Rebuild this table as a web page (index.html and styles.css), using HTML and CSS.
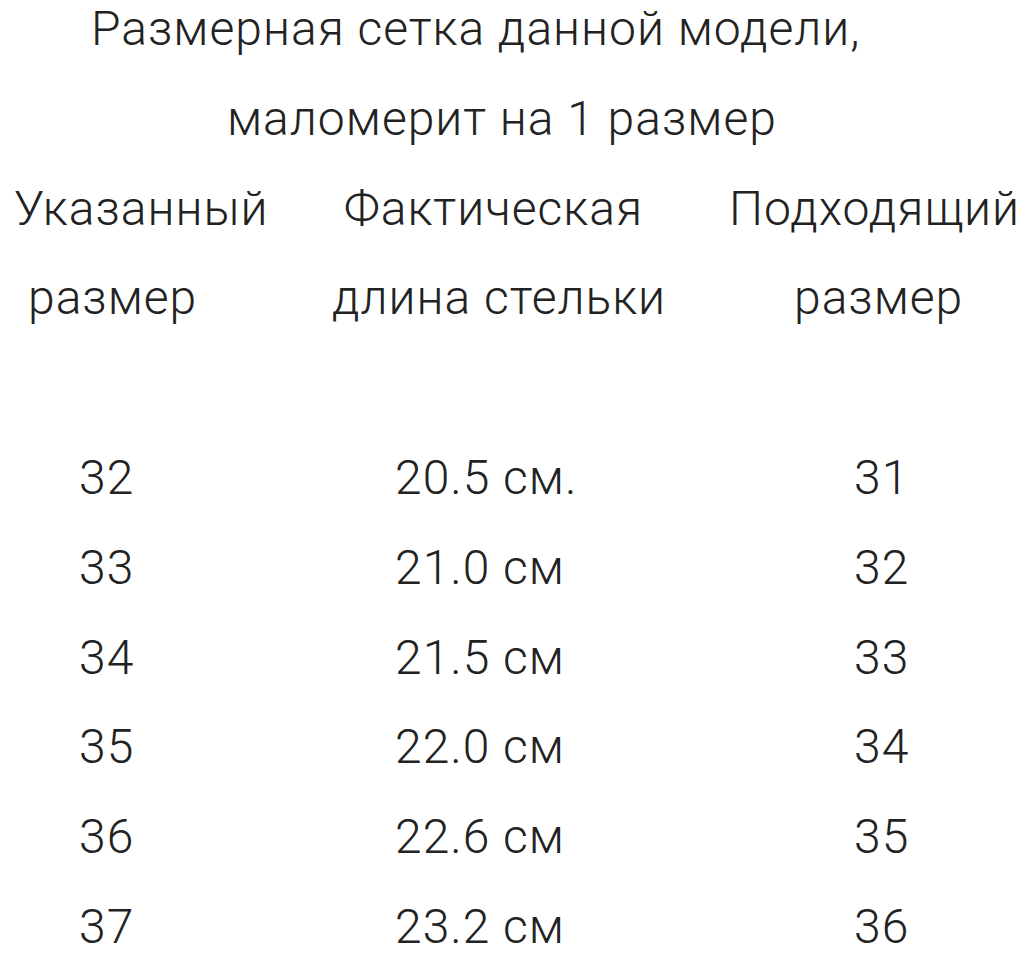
FILE: index.html
```html
<!DOCTYPE html>
<html lang="ru">
<head>
<meta charset="utf-8">
<title>Размерная сетка</title>
<link rel="stylesheet" href="styles.css">
</head>
<body>
<main class="sheet">
  <p class="line title-1">Размерная сетка данной модели,</p>
  <p class="line title-2">маломерит на 1 размер</p>
  <div class="line head-row head-1"><span>Указанный</span><span>Фактическая</span><span>Подходящий</span></div>
  <div class="line head-row head-2"><span>размер</span><span>длина стельки</span><span>размер</span></div>
  <div class="line spacer"></div>
  <div class="line size-row"><span>32</span><span>20.5 см.</span><span>31</span></div>
  <div class="line size-row"><span>33</span><span>21.0 см</span><span>32</span></div>
  <div class="line size-row"><span>34</span><span>21.5 см</span><span>33</span></div>
  <div class="line size-row"><span>35</span><span>22.0 см</span><span>34</span></div>
  <div class="line size-row"><span>36</span><span>22.6 см</span><span>35</span></div>
  <div class="line size-row"><span>37</span><span>23.2 см</span><span>36</span></div>
</main>
</body>
</html>
```

FILE: styles.css
```css
html, body {
  margin: 0;
  padding: 0;
  background: #ffffff;
}

body {
  font-family: Roboto, "Noto Sans", sans-serif;
  font-weight: 300;
  font-size: 48px;
  letter-spacing: 1px;
  color: #222222;
  overflow: hidden;
}

.sheet {
  margin-top: -16px;
}

.line {
  margin: 0;
  height: 89.8px;
  line-height: 89.8px;
  white-space: nowrap;
}

.title-1 {
  padding-left: 91px;
}

.title-2 {
  padding-left: 227px;
}

.head-row,
.size-row {
  display: grid;
}

.head-1 {
  padding-left: 14px;
  grid-template-columns: 330px 385px auto;
}

.head-2 {
  padding-left: 28px;
  grid-template-columns: 304px 462px auto;
}

.size-row {
  padding-left: 79px;
  grid-template-columns: 316px 459px auto;
}
```
